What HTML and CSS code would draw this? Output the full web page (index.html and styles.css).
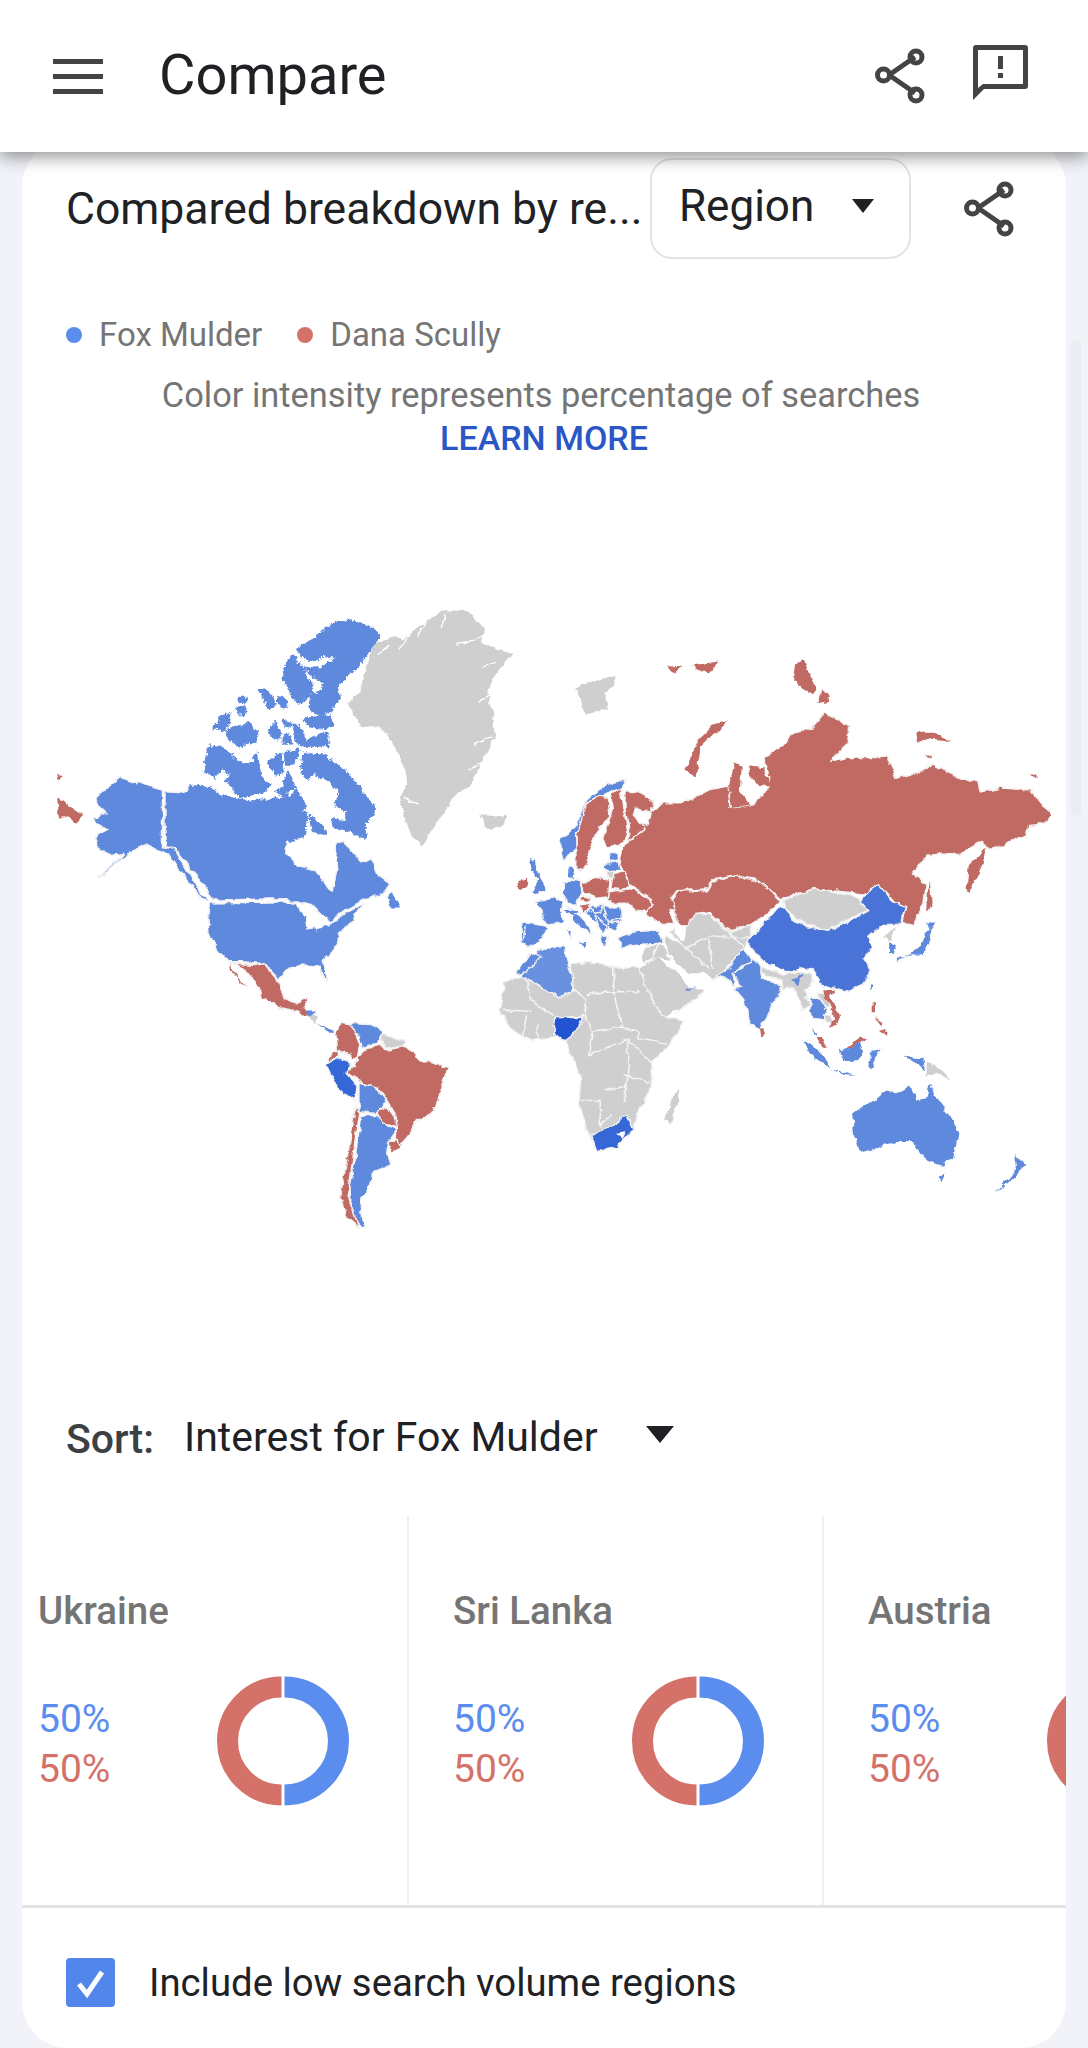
FILE: index.html
```html
<!DOCTYPE html>
<html lang="en">
<head>
<meta charset="utf-8">
<title>Compare</title>
<link rel="stylesheet" href="styles.css">
</head>
<body>
<svg class="defs" width="0" height="0" aria-hidden="true">
  <defs>
    <filter id="rough" x="0" y="0" width="100%" height="100%" filterUnits="objectBoundingBox">
      <feTurbulence type="fractalNoise" baseFrequency=".11" numOctaves="3" seed="4" result="n"/>
      <feDisplacementMap in="SourceGraphic" in2="n" scale="6" xChannelSelector="R" yChannelSelector="G"/>
      <feGaussianBlur stdDeviation=".55"/>
    </filter>
    <filter id="rougher" x="-5%" y="-5%" width="110%" height="110%">
      <feTurbulence type="fractalNoise" baseFrequency=".2" numOctaves="2" seed="9" result="n"/>
      <feDisplacementMap in="SourceGraphic" in2="n" scale="11" xChannelSelector="R" yChannelSelector="G"/>
    </filter>
    <g id="share-icon" fill="none" stroke="#444" stroke-width="5">
      <path d="M14 27 L40 9 M14 27 L40 45"/>
      <circle cx="41" cy="9" r="6"/>
      <circle cx="8.500" cy="27" r="6"/>
      <circle cx="41" cy="47" r="6"/>
    </g>
    <g id="donut" fill="none" stroke-width="21">
      <path d="M68.500 11 A54 54 0 0 1 68.500 119" stroke="#5a8ded"/>
      <path d="M65.500 119 A54 54 0 0 1 65.500 11" stroke="#d4726a"/>
    </g>
  </defs>
</svg>

<header class="topbar">
  <div class="hamburger"><span></span><span></span><span></span></div>
  <h1 class="page-title">Compare</h1>
  <div class="top-actions">
    <svg class="icon-share" viewBox="0 0 50 56"><use href="#share-icon"/></svg>
    <svg class="icon-feedback" viewBox="0 0 55 55"><path fill="#444" fill-rule="evenodd" d="M3 0H52a3 3 0 0 1 3 3V41a3 3 0 0 1-3 3H11L0 55V3a3 3 0 0 1 3-3ZM5 5V43L10 39H50V5ZM25 11H30V24H25ZM25 28H30V33H25Z"/></svg>
  </div>
</header>

<div class="scrollbar"></div>

<main class="card">
  <div class="title-row">
    <h2 class="section-title">Compared breakdown by re...</h2>
    <div class="region-select"><span>Region</span><i class="caret"></i></div>
    <svg class="icon-share section-share" viewBox="0 0 50 56"><use href="#share-icon"/></svg>
  </div>

  <div class="legend">
    <span class="legend-item"><i class="dot dot-blue"></i>Fox Mulder</span>
    <span class="legend-item"><i class="dot dot-red"></i>Dana Scully</span>
  </div>

  <p class="caption">Color intensity represents percentage of searches</p>
  <a class="learn-more">LEARN MORE</a>

  <svg class="map" viewBox="22 480 1044 800">
    <g class="ctry">
      <!-- Americas -->
      <g transform="translate(0 580) scale(.35714 .43367)">
        <path class="b" d="M265,500 L300,480 L335,455 L395,470 L455,485 L455,615 L490,622 L520,665 L560,720 L590,745 L565,735 L520,690 L480,640 L450,622 L400,610 L370,630 L340,640 L290,680 L270,690 L320,650 L345,630 L315,635 L275,622 L265,590 L300,578 L258,552 L300,538 L270,515 Z"/>
        <path class="b" d="M462,488 L500,490 L545,478 L590,475 L640,505 L700,515 L715,530 L770,520 L830,535 L860,530 L850,570 L810,585 L800,630 L830,660 L880,670 L905,690 L930,720 L945,660 L940,600 L970,610 L1010,650 L1040,640 L1060,680 L1095,700 L1060,730 L1020,735 L970,760 L920,790 L900,770 L870,745 L820,745 L800,735 L600,738 L575,710 L520,650 L490,620 L462,615 Z"/>
        <path class="b n" d="M1085,730 L1100,720 L1120,755 L1095,755 Z"/>
        <path class="b" d="M590,745 L800,742 L830,750 L870,752 L855,775 L860,805 L890,800 L920,795 L975,765 L1020,745 L1000,770 L985,785 L950,815 L945,840 L915,870 L905,885 L915,925 L905,915 L890,890 L850,888 L810,895 L780,920 L740,885 L680,880 L640,880 L610,855 L585,815 L582,780 Z"/>
        <path class="w" d="M830,752 L868,745 L892,768 L918,778 L905,802 L885,806 L875,775 L858,772 L860,806 L853,775 Z"/>
        <path class="g n" d="M1045,150 L1090,130 L1130,135 L1190,95 L1250,70 L1310,72 L1355,110 L1350,145 L1400,160 L1435,170 L1390,215 L1365,260 L1380,300 L1385,360 L1350,420 L1320,470 L1270,500 L1235,550 L1200,590 L1180,615 L1150,585 L1130,540 L1120,500 L1140,470 L1130,430 L1100,370 L1060,335 L1010,340 L990,310 L975,285 L1010,255 L1020,210 Z"/>
        <path class="fjord" d="M1190,95 L1170,130 M1250,80 L1235,110 M1280,150 L1350,130 M1350,200 L1390,190 M1340,280 L1385,260 M1330,380 L1380,360 M1310,440 L1350,420 M1130,500 L1170,520 M1060,170 L1090,150 M1120,160 L1150,120"/>
        <path class="g n" d="M1345,540 L1385,545 L1420,545 L1410,565 L1375,578 L1355,565 Z"/>
        <path class="r n" d="M160,497 L190,520 L235,540 L210,560 L190,545 L165,550 Z M160,447 L175,450 L165,458 Z"/>
        <path class="r" d="M640,880 L680,885 L740,888 L780,925 L795,965 L830,975 L862,960 L850,985 L825,995 L790,990 L735,965 L715,925 L690,905 L665,885 Z"/>
        <path class="r n" d="M645,882 L665,915 L692,942 L670,925 L650,900 Z M825,985 L850,985 L865,1000 L850,1005 Z"/>
        <path class="b n" d="M855,995 L885,995 L870,1010 Z M890,1025 L940,1040 L925,1045 Z"/>
        <path class="g n" d="M865,1005 L890,1005 L885,1025 Z"/>
        <path class="r" d="M960,1020 L985,1025 L1008,1070 L1000,1100 L990,1105 L975,1095 L945,1085 L940,1045 Z"/>
        <path class="b" d="M975,1022 L1040,1025 L1068,1040 L1060,1065 L1015,1080 L1005,1050 Z"/>
        <path class="g" d="M1065,1045 L1130,1065 L1130,1075 L1075,1080 Z"/>
        <path class="r" d="M925,1090 L950,1085 L945,1100 L920,1115 Z"/>
        <path class="d" d="M910,1120 L950,1100 L985,1115 L970,1135 L1000,1165 L995,1200 L950,1175 L930,1150 Z"/>
        <path class="r" d="M1000,1100 L1020,1085 L1065,1070 L1080,1085 L1135,1075 L1175,1105 L1255,1125 L1240,1165 L1215,1225 L1160,1250 L1145,1280 L1115,1310 L1110,1285 L1110,1240 L1085,1205 L1060,1175 L1000,1155 L970,1135 L1000,1110 Z"/>
        <path class="b" d="M1005,1160 L1050,1170 L1085,1205 L1050,1230 L1005,1225 Z"/>
        <path class="r" d="M1055,1225 L1085,1215 L1110,1245 L1110,1265 L1060,1240 Z"/>
        <path class="r" d="M1085,1295 L1115,1290 L1120,1310 L1095,1320 Z"/>
        <path class="b" d="M1010,1235 L1055,1235 L1110,1270 L1085,1300 L1080,1320 L1095,1345 L1045,1365 L1030,1410 L1010,1425 L1015,1470 L1025,1497 L985,1475 L980,1400 L995,1330 L1005,1270 Z"/>
        <path class="r" d="M995,1210 L1005,1225 L990,1320 L975,1420 L1005,1495 L970,1470 L955,1415 L970,1340 L985,1270 Z"/>
      </g>
      <!-- Arctic Canada -->
      <g class="arctic" transform="translate(190 600) scale(.33333)">
        <path class="b n" d="M322,150 L350,130 L370,120 L395,100 L410,85 L440,70 L480,65 L520,72 L550,90 L565,112 L535,150 L510,190 L480,220 L440,255 L445,290 L420,335 L395,345 L360,320 L365,290 L395,270 L405,250 L370,225 L345,205 L390,210 L440,170 L410,165 L370,180 L345,175 Z"/>
        <path class="b n" d="M305,170 L335,205 L360,250 L368,275 L340,300 L320,305 L300,270 L282,235 L290,195 Z"/>
        <path class="b n" d="M340,360 L380,350 L415,350 L425,375 L395,385 L360,375 Z M210,268 L230,272 L255,310 L240,322 L222,295 Z M268,290 L285,300 L290,322 L272,318 Z M150,295 L170,295 L165,308 L148,305 Z M140,325 L165,320 L165,340 L150,342 Z M68,385 L95,350 L120,340 L115,365 L100,395 L85,385 Z M110,400 L130,380 L160,385 L175,370 L190,395 L205,395 L200,420 L150,435 L120,420 Z M235,395 L260,370 L270,415 L245,410 Z M283,360 L300,365 L300,378 L283,375 Z M285,405 L300,410 L302,430 L285,430 Z M310,375 L330,385 L345,425 L410,400 L412,435 L345,438 L325,430 Z"/>
        <path class="b n" d="M60,440 L90,445 L125,465 L95,500 L75,530 L45,510 Z"/>
        <path class="b n" d="M100,495 L130,475 L155,495 L190,490 L200,465 L210,530 L240,555 L215,580 L150,590 L130,565 L110,540 L130,520 L100,510 Z"/>
        <path class="b n" d="M232,490 L270,460 L280,515 L260,520 Z M290,460 L325,450 L310,490 L292,490 Z M280,550 L295,520 L315,565 L290,570 Z M260,575 L280,565 L290,590 Z M335,500 L345,465 L370,465 L370,520 L355,535 L340,525 Z"/>
        <path class="b n" d="M375,470 L400,465 L430,490 L470,520 L510,570 L555,630 L535,655 L520,670 L530,710 L495,700 L470,680 L470,640 L445,610 L450,570 L420,540 L385,530 L365,500 Z"/>
        <path class="b n" d="M0,560 L50,570 L100,590 L140,600 L185,605 L250,600 L300,590 L320,575 L345,620 L310,650 L300,720 L0,720 Z"/>
        <path class="b n" d="M310,640 L350,640 L345,700 L300,720 Z M360,650 L400,680 L410,700 L370,695 Z M430,660 L470,665 L480,690 L435,680 Z M440,600 L455,605 L450,620 L438,615 Z"/>
      </g>
      <!-- Grey land under the Middle East -->
      <g transform="translate(500 760) scale(.33333)">
        <path class="g n" d="M420,625 L470,590 L510,620 L545,650 L570,680 L610,690 L575,730 L490,770 L455,730 Z"/>
        <path class="g n" d="M495,530 L560,560 L590,470 L640,480 L700,510 L745,520 L740,550 L720,580 L690,610 L640,660 L610,640 L570,640 L530,610 L500,570 Z"/>
        <path class="g n" d="M430,560 L490,555 L510,600 L470,590 L430,610 Z"/>
      </g>
      <!-- Eurasia, Africa, Oceania -->
      <g transform="translate(480 620) scale(.38776 .3954)">
        <path class="g" d="M50,985 L65,915 L110,900 L205,958 L240,935 L235,870 L300,865 L345,880 L410,880 L430,935 L470,1000 L525,1015 L480,1085 L440,1120 L445,1175 L410,1240 L395,1290 L340,1335 L300,1345 L280,1300 L255,1220 L260,1160 L235,1100 L220,1050 L130,1062 L80,1035 Z"/>
        <path class="line" d="M240,935 L275,960 L270,1000 L190,1010 M345,880 L345,940 L415,940 M275,945 L345,940 L365,1030 M270,1000 L290,1040 L365,1030 L410,1040 M410,1040 L410,1060 L480,1070 M290,1040 L280,1100 M280,1100 L380,1060 L385,1130 L375,1190 L375,1220 M250,1215 L310,1215 L310,1280 L340,1250 M370,1150 L440,1170 M120,910 L130,960 L190,1000 M60,985 L130,990 M110,1050 L120,1000 M150,1020 L150,1055 M380,1060 L440,1120 M320,1190 L375,1180"/>
        <path class="g n" d="M490,1220 L510,1185 L512,1210 L495,1270 L475,1265 Z"/>
        <path class="ng" d="M195,1005 L265,1005 L250,1040 L215,1065 L190,1045 Z"/>
        <path class="d" d="M285,1300 L340,1280 L375,1250 L395,1290 L350,1335 L300,1345 Z"/>
        <path class="w" d="M355,1300 L375,1295 L365,1315 Z"/>
        <path class="l" d="M110,900 L150,835 L215,825 L235,895 L240,935 L205,958 L150,925 Z"/>
        <path class="b" d="M90,895 L130,840 L160,850 L120,890 Z"/>
        <path class="g" d="M510,770 L555,745 L595,745 L640,790 L700,770 L695,805 L610,800 L570,810 L530,830 L490,790 Z"/>
        <path class="line" d="M480,800 L430,870 M530,830 L590,880 M590,810 L600,880 M640,790 L680,830 M500,1000 L575,945"/>
        <path class="w" d="M500,750 L530,770 L525,815 L500,790 Z"/>
        <path class="b n" d="M530,935 L555,925 L540,938 Z"/>
        <path class="r" d="M365,590 L390,530 L400,505 L430,520 L440,490 L470,465 L520,465 L590,430 L640,420 L645,475 L700,470 L745,425 L735,345 L780,320 L800,290 L860,270 L890,235 L950,265 L950,310 L905,355 L980,345 L1050,345 L1075,400 L1130,385 L1170,365 L1225,395 L1285,410 L1290,435 L1345,425 L1420,430 L1470,490 L1465,515 L1415,520 L1410,545 L1320,580 L1295,560 L1240,590 L1150,595 L1115,640 L1150,670 L1145,720 L1115,770 L1090,765 L1100,725 L1070,715 L1030,670 L1000,695 L960,690 L860,680 L775,705 L720,660 L700,655 L660,645 L600,655 L590,680 L510,685 L495,705 L505,730 L490,735 L500,770 L470,770 L430,745 L440,705 L390,670 L370,640 L360,620 Z"/>
        <path class="r n" d="M1160,660 L1165,720 L1150,740 L1155,690 Z M1255,680 L1260,620 L1310,575 L1295,620 L1265,685 Z M530,380 L565,300 L600,265 L640,255 L600,290 L570,320 L555,400 Z M480,120 L520,118 L500,135 Z M545,115 L615,105 L590,135 L560,125 Z M815,110 L835,100 L850,140 L865,170 L860,190 L830,170 L810,150 Z M870,210 L885,175 L900,205 Z M1125,285 L1175,285 L1215,305 L1150,300 L1130,310 Z M1145,345 L1165,340 L1165,350 Z M1415,395 L1435,390 L1435,400 Z M640,420 L655,360 L675,370 L670,430 L700,470 L650,475 Z M690,370 L730,375 L750,425 L720,420 L700,395 Z M725,1035 L735,1050 L725,1052 Z"/>
        <path class="g n" d="M245,170 L290,155 L350,140 L345,165 L320,185 L330,225 L290,235 L270,240 L260,200 Z M10,500 L70,490 L50,525 L20,530 Z M1040,800 L1075,775 L1055,815 Z"/>
        <path class="r" d="M495,710 L515,685 L590,685 L600,660 L660,645 L700,660 L720,660 L775,710 L745,740 L700,770 L640,785 L595,740 L555,745 L530,775 L505,765 L505,730 Z"/>
        <path class="g" d="M780,710 L860,680 L975,700 L1000,735 L960,750 L900,785 L840,770 L790,735 Z"/>
        <path class="c" d="M690,810 L730,770 L775,720 L800,750 L840,775 L900,785 L965,755 L1000,735 L980,710 L1010,680 L1030,668 L1060,710 L1100,725 L1085,770 L1040,770 L1000,800 L1010,830 L990,860 L1010,885 L985,925 L940,940 L880,920 L860,885 L830,880 L790,890 L730,860 L700,830 Z"/>
        <path class="b" d="M680,880 L690,855 L720,865 L730,905 L780,925 L750,980 L720,1035 L700,1020 L680,960 L655,935 L675,925 L650,895 Z"/>
        <path class="b" d="M600,910 L640,880 L680,830 L700,865 L670,880 L650,895 L660,925 L625,900 Z"/>
        <path class="b n" d="M1075,860 L1110,845 L1135,825 L1150,790 L1165,775 L1160,810 L1140,845 L1100,850 L1075,865 Z M1150,765 L1175,765 L1160,780 Z M1055,815 L1075,825 L1070,845 L1055,840 Z M1010,920 L1015,925 L1005,940 Z"/>
        <path class="b n" d="M960,1250 L1015,1215 L1045,1190 L1080,1195 L1110,1180 L1125,1215 L1150,1210 L1160,1175 L1185,1220 L1215,1260 L1235,1295 L1220,1360 L1190,1380 L1160,1370 L1135,1350 L1120,1320 L1075,1320 L1030,1330 L980,1345 L965,1305 Z M1180,1405 L1200,1400 L1190,1422 Z M1330,1448 L1365,1410 L1385,1385 L1380,1350 L1400,1375 L1410,1378 L1385,1400 L1360,1425 Z"/>
      </g>
      <!-- South-East Asia -->
      <g transform="translate(760 960) scale(.33333)">
        <path class="g" d="M0,20 L30,30 L70,45 L110,35 L150,40 L160,70 L130,90 L150,130 L125,150 L115,110 L100,80 L70,90 L65,60 L30,50 L0,35 Z"/>
        <path class="b" d="M150,115 L175,115 L205,150 L190,180 L160,175 L150,150 Z"/>
        <path class="g" d="M170,100 L195,100 L210,140 L195,145 Z"/>
        <path class="g" d="M190,165 L215,165 L220,190 L195,190 Z"/>
        <path class="r n" d="M190,90 L225,90 L210,110 L240,170 L230,195 L205,205 L225,175 L215,140 L195,115 Z M170,235 L185,232 L200,265 L185,262 Z M260,265 L300,230 L318,235 L300,248 L265,270 Z M335,130 L345,130 L345,160 L335,160 Z M360,215 L380,210 L378,230 Z M340,170 L370,190 L365,200 Z M0,205 L10,205 L15,225 L3,228 Z"/>
        <path class="b n" d="M155,205 L170,225 L165,230 Z M130,238 L165,260 L215,325 L185,310 L150,280 Z M215,328 L290,348 L250,345 Z M240,270 L265,268 L300,248 L310,275 L280,310 L250,300 Z M330,280 L365,268 L340,295 L345,320 L325,320 Z M425,290 L490,295 L495,335 L465,305 Z M95,60 L135,40 L110,75 Z"/>
        <path class="g n" d="M500,305 L530,315 L575,360 L525,340 L500,350 Z"/>
      </g>
      <!-- Europe -->
      <g transform="translate(500 760) scale(.33333)">
        <path class="b n" d="M190,440 L250,460 L270,440 L360,440 L365,480 L345,510 L325,505 L290,490 L260,460 Z"/>
        <path class="b" d="M180,240 L230,190 L260,120 L320,70 L380,60 L365,85 L320,100 L285,115 L250,165 L230,220 L232,260 L190,300 L178,265 Z"/>
        <path class="r" d="M230,320 L232,220 L260,130 L300,105 L325,115 L330,170 L290,210 L275,260 L260,310 L240,335 Z"/>
        <path class="r" d="M335,105 L360,85 L370,150 L385,220 L360,255 L320,265 L308,235 L330,180 L340,150 Z"/>
        <path class="r" d="M375,90 L420,100 L465,125 L455,160 L405,145 L400,165 L435,205 L380,250 L390,220 L375,150 Z"/>
        <path class="b" d="M330,280 L355,282 L355,300 L325,305 Z"/>
        <path class="b" d="M310,310 L355,305 L360,330 L330,335 L310,325 Z"/>
        <path class="g" d="M315,335 L345,330 L345,360 L325,355 Z"/>
        <path class="r" d="M345,340 L375,335 L390,375 L365,390 L335,385 Z"/>
        <path class="r" d="M247,365 L285,355 L330,360 L325,410 L290,415 L247,395 Z"/>
        <path class="r" d="M325,395 L365,390 L400,385 L425,400 L460,430 L440,455 L405,450 L385,430 L340,430 L322,420 Z"/>
        <path class="b" d="M190,370 L215,360 L245,365 L245,395 L235,415 L230,435 L205,435 L190,405 Z"/>
        <path class="b n" d="M205,315 L225,330 L215,358 L205,350 Z"/>
        <path class="b n" d="M90,300 L105,305 L115,345 L140,390 L110,402 L95,395 L115,360 L95,330 Z"/>
        <path class="r n" d="M55,360 L85,350 L80,380 L58,390 Z"/>
        <path class="b" d="M105,425 L145,420 L160,405 L190,425 L185,450 L190,485 L150,495 L130,480 L125,450 Z"/>
        <path class="b" d="M62,490 L90,490 L150,500 L115,545 L85,560 L65,550 Z"/>
        <path class="line" d="M75,500 L70,545"/>
        <path class="b n" d="M215,455 L245,475 L275,525 L255,510 L225,490 Z M190,450 L235,450 L215,465 Z M205,510 L212,510 L210,535 Z M240,548 L260,545 L250,558 Z"/>
        <path class="r" d="M240,405 L275,415 L265,425 L240,420 Z"/>
        <path class="r" d="M240,435 L275,430 L265,455 L250,460 Z"/>
        <path class="b" d="M270,440 L310,432 L305,455 L285,460 Z"/>
        <path class="b" d="M310,440 L360,440 L365,475 L325,485 Z"/>
        <path class="b" d="M325,490 L360,485 L345,510 L325,505 Z"/>
        <path class="b" d="M285,465 L320,495 L310,520 L295,500 Z"/>
        <path class="b" d="M300,520 L325,530 L320,560 L310,555 Z"/>
        <path class="b" d="M352,535 L400,515 L480,510 L490,550 L440,552 L365,562 Z"/>
      </g>
    </g>
  </svg>

  <div class="sort-row">
    <span class="sort-label">Sort:</span>
    <span class="sort-value">Interest for Fox Mulder</span>
    <i class="caret caret-large"></i>
  </div>

  <div class="region-cards">
    <div class="region-track">
      <article class="region-card">
        <h3 class="region-name">Ukraine</h3>
        <div class="region-body">
          <div class="shares"><span class="share-blue">50%</span><span class="share-red">50%</span></div>
          <svg class="donut" viewBox="0 0 134 130"><use href="#donut"/></svg>
        </div>
      </article>
      <article class="region-card">
        <h3 class="region-name">Sri Lanka</h3>
        <div class="region-body">
          <div class="shares"><span class="share-blue">50%</span><span class="share-red">50%</span></div>
          <svg class="donut" viewBox="0 0 134 130"><use href="#donut"/></svg>
        </div>
      </article>
      <article class="region-card">
        <h3 class="region-name">Austria</h3>
        <div class="region-body">
          <div class="shares"><span class="share-blue">50%</span><span class="share-red">50%</span></div>
          <svg class="donut" viewBox="0 0 134 130"><use href="#donut"/></svg>
        </div>
      </article>
    </div>
  </div>

  <label class="low-volume">
    <span class="checkbox"><svg viewBox="0 0 49 49"><path d="M13 26 L21 36 L36 14" fill="none" stroke="#fff" stroke-width="5"/></svg></span>
    <span>Include low search volume regions</span>
  </label>
</main>
</body>
</html>
```

FILE: styles.css
```css
* { box-sizing: border-box; }
html, body { margin: 0; padding: 0; }
body {
  width: 1088px;
  height: 2048px;
  overflow: hidden;
  background: #f1f3f9;
  font-family: Roboto, "Liberation Sans", sans-serif;
  color: #202124;
  position: relative;
}
.defs { display: block; height: 0; }

.topbar {
  position: relative;
  z-index: 2;
  height: 152px;
  background: #fff;
  display: flex;
  align-items: center;
  padding: 0 60px 0 53px;
  box-shadow: 0 5px 16px rgba(0, 0, 0, .42);
}
.hamburger { width: 50px; display: flex; flex-direction: column; gap: 10px; margin-top: 1px; }
.hamburger span { display: block; height: 5px; background: #444; }
.page-title { margin: -2px 0 0 56px; font-size: 56px; font-weight: 400; line-height: 64px; color: #202124; }
.top-actions { margin-left: auto; display: flex; align-items: flex-start; gap: 48px; }
.icon-share { width: 50px; height: 56px; display: block; }
.icon-feedback { width: 55px; height: 55px; display: block; margin-top: -3px; }

.scrollbar { position: absolute; left: 1071px; top: 340px; width: 10px; height: 476px; border-radius: 5px; background: #eaecf1; }

.card {
  margin: -12px 22px 0;
  height: 1908px;
  background: #fff;
  border-radius: 46px;
  position: relative;
}
.title-row { display: flex; align-items: center; padding: 18px 0 0 44px; }
.section-title { margin: 0; width: 584px; font-size: 44.500px; font-weight: 400; line-height: 90px; white-space: nowrap; color: #202124; }
.region-select {
  width: 261px;
  height: 101px;
  border: 2px solid #e3e3e3;
  border-radius: 22px;
  display: flex;
  align-items: center;
  padding: 0 0 6px 27px;
  font-size: 44px;
}
.caret { display: block; width: 0; height: 0; border-style: solid; border-width: 14px 11.500px 0; border-color: #202124 transparent transparent; margin-left: 38px; }
.section-share { margin: 0 0 0 53px; }

.legend { display: flex; gap: 35px; margin: 56px 0 0 44px; font-size: 33px; line-height: 40px; color: #757575; }
.legend-item { display: flex; align-items: center; }
.dot { width: 16px; height: 16px; border-radius: 50%; margin-right: 17px; }
.dot-blue { background: #5a8ded; }
.dot-red { background: #d4726a; }
.caption { margin: 18px 0 0; padding-right: 6px; text-align: center; font-size: 34.400px; line-height: 44px; color: #757575; }
.learn-more { display: block; text-align: center; font-size: 34px; font-weight: 500; line-height: 42px; color: #2a56c6; }

.map { display: block; width: 1044px; height: 800px; margin-top: 21px; }
.ctry { filter: url(#rough); }
.arctic { filter: url(#rougher); }
.ctry path { stroke: #f2f2f2; stroke-width: 1.500; vector-effect: non-scaling-stroke; stroke-linejoin: round; }
.ctry path.n { stroke: none; }
.ctry .arctic path.n { stroke: #5f89dc; stroke-width: 3; }
.ctry .b { fill: #5f89dc; }
.ctry .l { fill: #6a90e0; }
.ctry .c { fill: #4873d6; }
.ctry .d { fill: #3668d6; }
.ctry .ng { fill: #2352d0; }
.ctry .r { fill: #c16b63; }
.ctry .g { fill: #cfcfcf; }
.ctry .w { fill: #fff; stroke: none; }
.ctry .line { fill: none; stroke: #f5f5f5; stroke-width: 1.500; }
.ctry .fjord { fill: none; stroke: #fff; stroke-width: 1.500; }

.sort-row { display: flex; align-items: center; margin: 132px 0 0 44px; height: 50px; font-size: 41px; }
.sort-label { font-weight: 500; color: #3c4043; font-size: 41px; margin-top: 4px; }
.sort-value { margin-left: 30px; color: #202124; }
.caret-large { margin-left: 48px; border-width: 17px 14px 0; margin-top: -5px; }

.region-cards { margin-top: 54px; height: 392px; overflow: hidden; border-bottom: 3px solid #e3e3e3; }
.region-track { display: flex; margin-left: -28px; }
.region-card { flex: 0 0 415px; height: 389px; padding: 70px 0 0 44px; border-right: 2px solid #efefef; }
.region-name { margin: 0; font-size: 38.500px; font-weight: 500; line-height: 50px; color: #757575; }
.region-body { display: flex; margin-top: 40px; }
.shares { display: flex; flex-direction: column; width: 178px; padding-top: 18px; font-size: 39px; line-height: 50px; }
.share-blue { color: #5a8ded; }
.share-red { color: #d4726a; }
.donut { width: 134px; height: 130px; flex: none; display: block; }

.low-volume { display: flex; align-items: center; margin: 50px 0 0 44px; font-size: 38.300px; color: #202124; }
.checkbox { width: 49px; height: 49px; border-radius: 4px; background: #5286ea; margin-right: 34px; display: block; }
.checkbox svg { display: block; }
```
